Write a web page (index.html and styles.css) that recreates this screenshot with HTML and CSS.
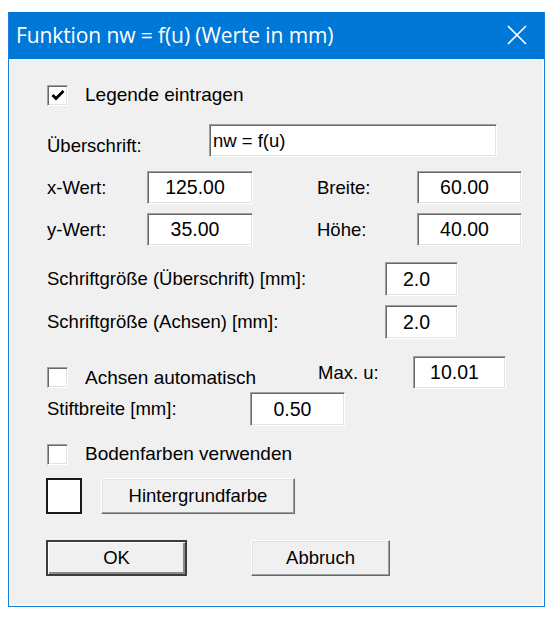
FILE: index.html
```html
<!DOCTYPE html>
<html lang="de">
<head>
<meta charset="utf-8">
<title>Funktion nw = f(u)</title>
<link rel="stylesheet" href="styles.css">
</head>
<body>
<div class="window">
  <div class="titlebar">
    <span class="title">Funktion nw = f(u) (Werte in mm)</span>
    <svg class="close" width="20" height="20" viewBox="0 0 20 20"><path d="M1 1 L19 19 M19 1 L1 19" stroke="#fff" stroke-width="1.6" fill="none"/></svg>
  </div>
  <div class="client">
    <div class="row r1">
      <span class="check"><svg width="14" height="12" viewBox="0 0 14 12"><path d="M1.5 6 L5 9.5 L12.5 2" stroke="#000" stroke-width="2.8" fill="none"/></svg></span>
      <span class="cblabel">Legende eintragen</span>
    </div>
    <div class="row r2">
      <span class="lbl w-ueb low">Überschrift:</span>
      <span class="field left w-ueb-in">nw = f(u)</span>
    </div>
    <div class="row r3">
      <span class="lbl w100">x-Wert:</span>
      <span class="field w106">125.00</span>
      <span class="lbl w100 ml64">Breite:</span>
      <span class="field w105">60.00</span>
    </div>
    <div class="row r4">
      <span class="lbl w100">y-Wert:</span>
      <span class="field w106">35.00</span>
      <span class="lbl w100 ml64">Höhe:</span>
      <span class="field w105">40.00</span>
    </div>
    <div class="row r5">
      <span class="lbl w338">Schriftgröße (Überschrift) [mm]:</span>
      <span class="field w73">2.0</span>
    </div>
    <div class="row r6">
      <span class="lbl w338">Schriftgröße (Achsen) [mm]:</span>
      <span class="field w73">2.0</span>
    </div>
    <div class="row r7">
      <span class="check down"></span>
      <span class="cblabel w233 down">Achsen automatisch</span>
      <span class="lbl w95">Max. u:</span>
      <span class="field w93">10.01</span>
    </div>
    <div class="row r8">
      <span class="lbl w203">Stiftbreite [mm]:</span>
      <span class="field w95">0.50</span>
    </div>
    <div class="row r9">
      <span class="check"></span>
      <span class="cblabel">Bodenfarben verwenden</span>
    </div>
    <div class="row r10">
      <span class="swatch"></span>
      <span class="btn w194">Hintergrundfarbe</span>
    </div>
    <div class="row r11">
      <span class="btn default w141">OK</span>
      <span class="btn w139 ml64b">Abbruch</span>
    </div>
  </div>
</div>
</body>
</html>
```

FILE: styles.css
```css
html, body {
  margin: 0;
  padding: 0;
  background: #ffffff;
}
body {
  font-family: "Liberation Sans", Arial, sans-serif;
  font-size: 18.5px;
  color: #000;
}
.window {
  margin: 12px 0 0 8px;
  width: 537px;
  height: 595px;
  box-sizing: border-box;
  border: 1px solid #1a7fd6;
  border-top: none;
  background: #f0f0f0;
  display: flex;
  flex-direction: column;
}
.titlebar {
  height: 47px;
  background: #0078d7;
  display: flex;
  align-items: center;
  justify-content: space-between;
  padding: 0 17px 0 7px;
  flex-shrink: 0;
}
.title {
  color: #fff;
  font-family: "Open Sans", "Noto Sans", sans-serif;
  font-size: 21px;
  letter-spacing: -0.1px;
  margin-top: -2px;
}
.close {
  margin-top: -1px;
}
.client {
  flex: 1;
  box-shadow: inset 1px 0 #fbf9f2, inset -2px 0 #fbf9f2, inset 0 -2px #fbf9f2;
  padding: 25px 0 0 38px;
}
.row {
  display: flex;
  align-items: center;
}
.r1 { height: 22px; }
.r2 { margin-top: 18px; height: 33px; }
.r3 { margin-top: 14px; height: 33px; }
.r4 { margin-top: 9px; height: 33px; }
.r5 { margin-top: 16px; height: 34px; }
.r6 { margin-top: 9px; height: 34px; }
.r7 { margin-top: 17px; height: 33px; }
.r8 { margin-top: 3px; height: 34px; }
.r9 { margin-top: 17px; height: 22px; }
.r10 { margin-top: 12px; height: 37px; }
.r11 { margin-top: 25px; height: 37px; margin-left: -1px; }

.check {
  width: 21px;
  height: 21px;
  box-sizing: border-box;
  background: #fff;
  border: 1px solid;
  border-color: #a0a0a0 #ffffff #ffffff #a0a0a0;
  box-shadow: inset 1px 1px #696969, inset -1px -1px #e3e3e3;
  display: flex;
  align-items: center;
  justify-content: center;
  flex-shrink: 0;
}
.cblabel {
  margin-left: 17px;
  font-size: 19px;
}
.down { position: relative; top: 5px; }
.lbl { flex-shrink: 0; }
.low { position: relative; top: 5px; }
.field {
  height: 33px;
  box-sizing: border-box;
  background: #fff;
  border: 1px solid;
  border-color: #a0a0a0 #ffffff #ffffff #a0a0a0;
  box-shadow: inset 1px 1px #696969, inset -1px -1px #e3e3e3;
  display: flex;
  align-items: center;
  justify-content: center;
  padding-right: 10px;
  flex-shrink: 0;
  font-size: 19.5px;
}
.r5 .field, .r6 .field, .r8 .field { height: 34px; }
.field.left {
  justify-content: flex-start;
  padding: 0 0 0 3px;
  font-size: 18.5px;
}
.w-ueb { width: 162px; }
.w-ueb-in { width: 288px; }
.w100 { width: 100px; }
.w106 { width: 106px; }
.w105 { width: 105px; }
.ml64 { margin-left: 64px; }
.w338 { width: 338px; }
.w73 { width: 73px; }
.w233 { width: 233px; }
.w95 { width: 95px; }
.w93 { width: 93px; }
.w203 { width: 203px; }
.w194 { width: 194px; }
.w141 { width: 141px; }
.w139 { width: 139px; }
.ml64b { margin-left: 64px; }

.swatch {
  width: 36px;
  height: 36px;
  box-sizing: border-box;
  background: #fff;
  border: 2px solid #1a1a1a;
  margin-left: -1px;
  flex-shrink: 0;
}
.btn {
  height: 36px;
  box-sizing: border-box;
  background: #f0f0f0;
  border: 1px solid;
  border-color: #ffffff #696969 #696969 #ffffff;
  box-shadow: inset -1px -1px #a0a0a0, inset 1px 1px #e3e3e3;
  display: flex;
  align-items: center;
  justify-content: center;
  flex-shrink: 0;
}
.r10 .btn { margin-left: 19px; }
.btn.default {
  border: 2px solid #3c3c3c;
  box-shadow: inset 1px 1px #ffffff, inset -2px -2px #8a8a8a;
}
```
